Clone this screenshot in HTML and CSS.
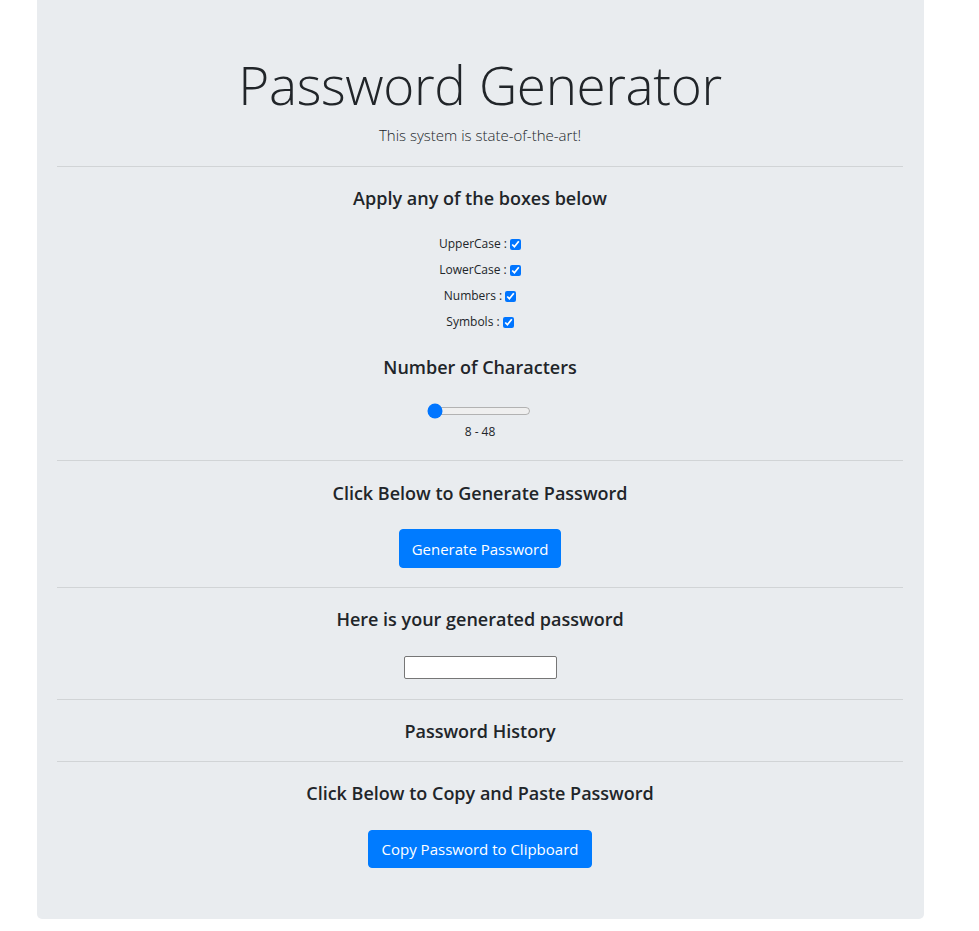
FILE: index.html
```html
<!DOCTYPE html>
<html lang="en">
<head>
<meta charset="utf-8">
<title>Password Generator</title>
<link rel="stylesheet" href="styles.css">
</head>
<body>
<div class="page">
  <main class="jumbotron">
    <h1 class="title">Password Generator</h1>
    <p class="lead">This system is state-of-the-art!</p>
    <hr class="rule">
    <section class="block">
      <h5 class="heading">Apply any of the boxes below</h5>
      <div class="checks">
        <label class="check">UpperCase : <input type="checkbox" checked></label>
        <label class="check">LowerCase : <input type="checkbox" checked></label>
        <label class="check">Numbers : <input type="checkbox" checked></label>
        <label class="check">Symbols : <input type="checkbox" checked></label>
      </div>
      <h5 class="heading heading-chars">Number of Characters</h5>
      <input class="slider" type="range" min="8" max="48" value="8">
      <div class="range-label">8 - 48</div>
    </section>
    <hr class="rule">
    <section class="block block-generate">
      <h5 class="heading">Click Below to Generate Password</h5>
      <button class="btn btn-gen" type="button">Generate Password</button>
    </section>
    <hr class="rule">
    <section class="block block-output">
      <h5 class="heading">Here is your generated password</h5>
      <input class="output" type="text">
    </section>
    <hr class="rule">
    <section class="block block-history">
      <h5 class="heading">Password History</h5>
    </section>
    <hr class="rule">
    <section class="block block-last">
      <h5 class="heading">Click Below to Copy and Paste Password</h5>
      <button class="btn btn-copy" type="button">Copy Password to Clipboard</button>
    </section>
  </main>
</div>
</body>
</html>
```

FILE: styles.css
```css
html, body {
  margin: 0;
  padding: 0;
  background: #fff;
}
body {
  font-family: "Open Sans", "Noto Sans", "DejaVu Sans", sans-serif;
  color: #212529;
}
.page {
  padding-left: 37px;
}
.jumbotron {
  width: 887px;
  box-sizing: border-box;
  background: #e9ecef;
  border-radius: 0 0 5px 5px;
  padding: 51px 21px 51px 20px;
  text-align: center;
}
.title {
  margin: 0;
  font-size: 53px;
  line-height: 68px;
  font-weight: 300;
  letter-spacing: -0.35px;
}
.lead {
  margin: 4px 0 0;
  font-size: 15px;
  line-height: 24px;
  font-weight: 300;
}
.rule {
  margin: 19px 0 0;
  border: 0;
  border-top: 1px solid rgba(0, 0, 0, 0.1);
  height: 0;
}
.block {
  padding-top: 19px;
  padding-bottom: 19px;
  display: flex;
  flex-direction: column;
  align-items: center;
}
.block + .rule {
  margin-top: 0;
}
.block-generate {
  padding-top: 20px;
}
.block-output {
  padding-bottom: 20px;
}
.block-history {
  padding-bottom: 18px;
}
.block-last {
  padding-bottom: 0;
}
.heading {
  margin: 0;
  font-size: 18px;
  line-height: 24px;
  font-weight: 600;
}
.checks {
  margin-top: 21px;
  display: flex;
  flex-direction: column;
  align-items: center;
}
.check {
  height: 26px;
  line-height: 26px;
  font-size: 12px;
  display: flex;
  align-items: center;
  gap: 3px;
}
.check input {
  margin: 0;
  width: 11px;
  height: 11px;
}
.heading-chars {
  margin-top: 20px;
}
.slider {
  display: block;
  width: 104px;
  height: 16px;
  margin: 24px 2px 0 0;
  padding: 0;
}
.range-label {
  margin-top: 4px;
  font-size: 12px;
  line-height: 18px;
}
.btn {
  margin-top: 24px;
  background: #007bff;
  color: #fff;
  border: 1px solid #007bff;
  border-radius: 4px;
  font-family: inherit;
  font-size: 15px;
  line-height: 24px;
  padding: 6px 12px;
  height: 39px;
  box-sizing: border-box;
}
.btn-copy {
  margin-top: 25px;
  height: 38px;
  padding: 6px 13px;
}
.output {
  margin-top: 25px;
  width: 153px;
  height: 23px;
  box-sizing: border-box;
  border: 1px solid #767676;
  border-radius: 2px;
  background: #fff;
  padding: 1px 2px;
}
```
